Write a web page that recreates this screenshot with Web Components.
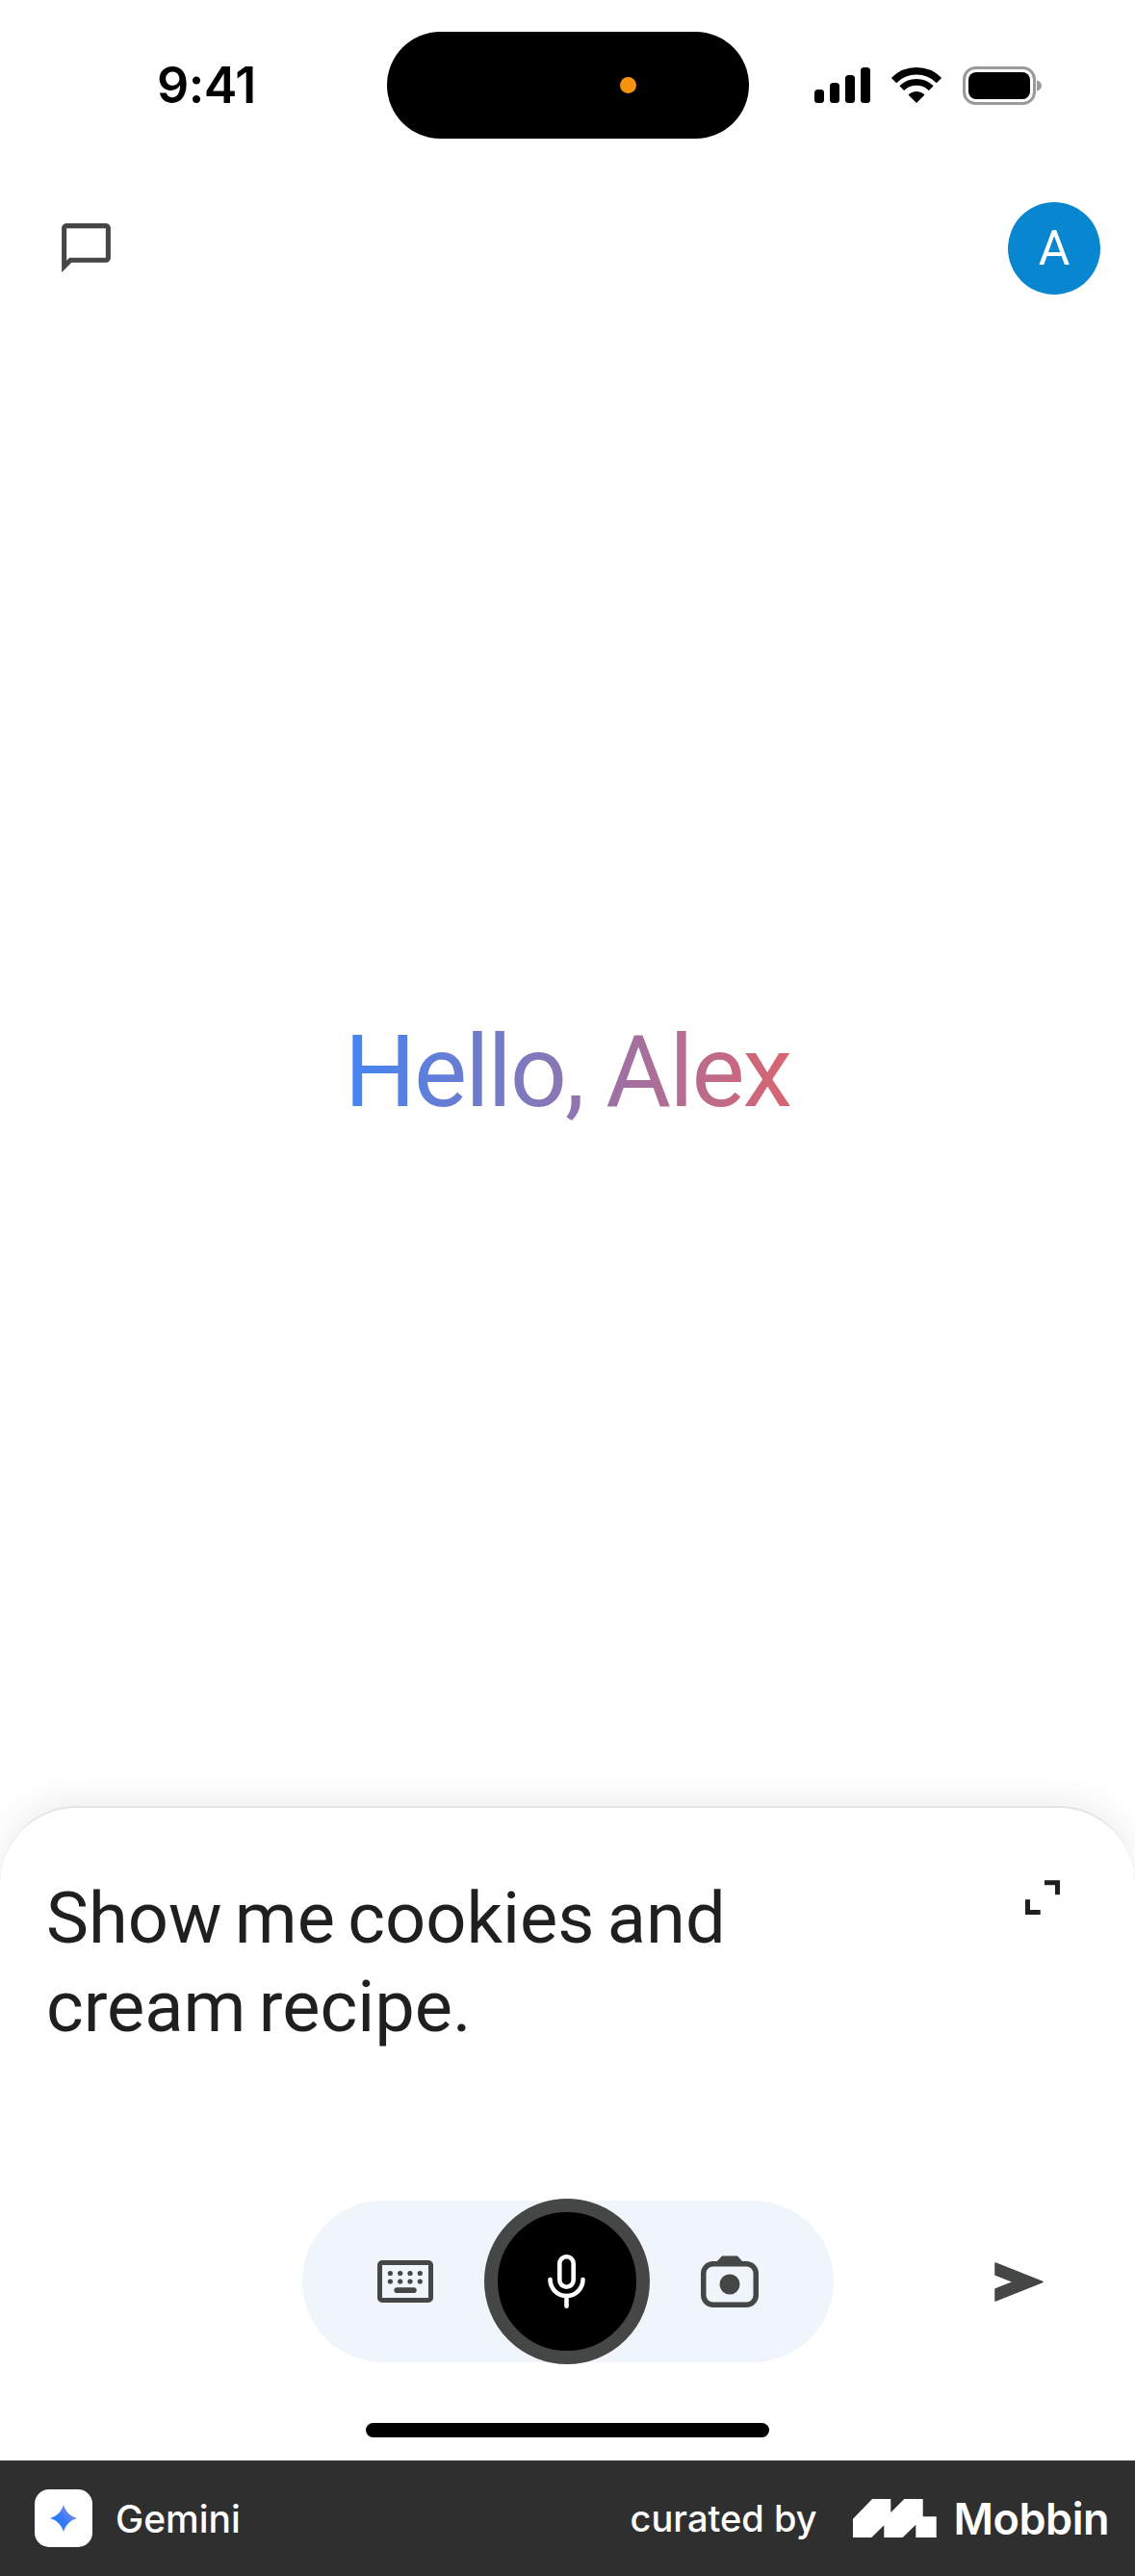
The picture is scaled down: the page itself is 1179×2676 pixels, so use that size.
<!DOCTYPE html>
<html lang="en">
<head>
<meta charset="utf-8">
<title>Gemini</title>
<style>
  html, body { margin: 0; background: #fff; }
</style>
</head>
<body>
<gemini-app></gemini-app>
<script>
class StatusBar extends HTMLElement {
  constructor() {
    super();
    this.attachShadow({ mode: 'open' });
    this.shadowRoot.innerHTML = `
      <style>
        :host { display: flex; align-items: center; height: 111px; padding-top: 33px; }
        .time {
          width: 239px;
          padding-left: 163px;
          font: 600 52px/1 Inter, "Liberation Sans", sans-serif;
          letter-spacing: -0.5px;
          color: #000;
        }
        .island {
          display: flex;
          align-items: center;
          justify-content: flex-end;
          box-sizing: border-box;
          width: 376px;
          height: 111px;
          padding-right: 117px;
          border-radius: 56px;
          background: #000;
        }
        .dot { width: 17px; height: 17px; border-radius: 50%; background: #f7930e; }
        .icons { display: flex; align-items: center; gap: 22px; padding-left: 68px; }
        svg { display: block; }
      </style>
      <div class="time">9:41</div>
      <div class="island"><div class="dot"></div></div>
      <div class="icons">
        <svg width="58" height="37" viewBox="0 0 58 37">
          <rect x="0" y="23" width="10" height="14" rx="3.5"/>
          <rect x="16" y="16" width="10" height="21" rx="3.5"/>
          <rect x="32" y="8" width="10" height="29" rx="3.5"/>
          <rect x="48" y="0" width="10" height="37" rx="3.5"/>
        </svg>
        <svg width="52" height="37" viewBox="0 0 52 37">
          <path d="M2.5 13.5A33.25 33.25 0 0 1 49.5 13.5" fill="none" stroke="#000" stroke-width="7.5"/>
          <path d="M10.7 21.7A21.6 21.6 0 0 1 41.3 21.7" fill="none" stroke="#000" stroke-width="6.7"/>
          <path d="M26 37L17.5 28.5A12 12 0 0 1 34.5 28.5Z"/>
        </svg>
        <svg width="83" height="40" viewBox="0 0 83 40">
          <rect x="1.5" y="1.5" width="73" height="37" rx="12" fill="none" stroke="#9a9a9a" stroke-width="3"/>
          <rect x="6" y="6" width="64" height="28" rx="8"/>
          <path d="M77 14.5c3 .6 5 2.8 5 5.5s-2 4.900-5 5.500z" fill="#9a9a9a"/>
        </svg>
      </div>
    `;
  }
}
customElements.define('status-bar', StatusBar);

class TopBar extends HTMLElement {
  constructor() {
    super();
    this.attachShadow({ mode: 'open' });
    this.shadowRoot.innerHTML = `
      <style>
        :host {
          display: flex;
          justify-content: space-between;
          align-items: flex-start;
          padding: 66px 36px 0 59px;
        }
        svg { display: block; margin-top: 17px; }
        .avatar {
          display: flex;
          align-items: center;
          justify-content: center;
          width: 96px;
          height: 96px;
          border-radius: 50%;
          background: #0986d0;
          color: #fff;
          font: 400 50px/1 Roboto, sans-serif;
        }
      </style>
      <svg width="61" height="61" viewBox="0 0 24 24" fill="#444746">
        <path d="M4 4h16v12H5.170L4 17.170V4m0-2c-1.100 0-2 .9-2 2v18l4-4h14c1.100 0 2-.9 2-2V4c0-1.100-.9-2-2-2H4z"/>
      </svg>
      <div class="avatar">A</div>
    `;
  }
}
customElements.define('top-bar', TopBar);

class GreetingText extends HTMLElement {
  constructor() {
    super();
    this.attachShadow({ mode: 'open' });
    this.shadowRoot.innerHTML = `
      <style>
        :host {
          display: flex;
          flex: 1;
          align-items: center;
          justify-content: center;
          padding-top: 46px;
        }
        span {
          font: 400 104px/1.2 Roboto, sans-serif;
          letter-spacing: -2px;
          color: #8f73c8;
          background: linear-gradient(90deg, #4285f4, #d96570);
          -webkit-background-clip: text;
          background-clip: text;
          -webkit-text-fill-color: transparent;
        }
      </style>
      <span><slot></slot></span>
    `;
  }
}
customElements.define('greeting-text', GreetingText);

class VoiceControls extends HTMLElement {
  constructor() {
    super();
    this.attachShadow({ mode: 'open' });
    this.shadowRoot.innerHTML = `
      <style>
        :host {
          display: grid;
          grid-template-columns: 1fr auto 1fr;
          align-items: center;
        }
        .pill {
          grid-column: 2;
          display: flex;
          align-items: center;
          justify-content: center;
          gap: 53px;
          width: 552px;
          height: 168px;
          border-radius: 84px;
          background: #f0f5fb;
        }
        .mic {
          display: flex;
          align-items: center;
          justify-content: center;
          box-sizing: border-box;
          width: 172px;
          height: 172px;
          margin: -2px 0;
          border: 14px solid #444746;
          border-radius: 50%;
          background: #000;
        }
        svg { display: block; }
        .send { margin-left: 167px; }
      </style>
      <div class="pill">
        <svg width="58" height="44" viewBox="0 0 58 44" fill="#444746">
          <rect x="2.500" y="2.500" width="53" height="39" rx="2.500" fill="none" stroke="#444746" stroke-width="5"/>
          <circle cx="13.400" cy="13.500" r="2.600"/><circle cx="23.700" cy="13.500" r="2.600"/>
          <circle cx="34" cy="13.500" r="2.600"/><circle cx="44.300" cy="13.500" r="2.600"/>
          <circle cx="13.400" cy="22" r="2.600"/><circle cx="23.700" cy="22" r="2.600"/>
          <circle cx="34" cy="22" r="2.600"/><circle cx="44.300" cy="22" r="2.600"/>
          <rect x="17.400" y="28.300" width="23.300" height="5.700" rx="2.800"/>
        </svg>
        <div class="mic">
          <svg width="39" height="56" viewBox="0 0 39 56" fill="none" stroke="#fff" stroke-width="4.600" stroke-linecap="round">
            <rect x="12.300" y="2.300" width="14.400" height="31.400" rx="7.200"/>
            <path d="M2.500 26A17 17 0 0 0 36.500 26"/>
            <path d="M19.500 43V53.700"/>
          </svg>
        </div>
        <svg width="60" height="54" viewBox="0 0 60 54" fill="#444746">
          <rect x="2.750" y="8.750" width="54.500" height="42.500" rx="10" fill="none" stroke="#444746" stroke-width="5.500"/>
          <path d="M16 7L22 .5H38L44 7Z"/>
          <circle cx="30" cy="30" r="10.500"/>
        </svg>
      </div>
      <svg class="send" width="51" height="41" viewBox="0 0 51 41" fill="#444746">
        <path d="M1 1L50 20.500L1 40V28L20 20.500L1 13Z" stroke="#444746" stroke-width="1.500" stroke-linejoin="round"/>
      </svg>
    `;
  }
}
customElements.define('voice-controls', VoiceControls);

class ComposerPanel extends HTMLElement {
  constructor() {
    super();
    this.attachShadow({ mode: 'open' });
    this.shadowRoot.innerHTML = `
      <style>
        :host {
          display: flex;
          flex-direction: column;
          box-sizing: border-box;
          height: 680px;
          border-top: 2px solid #e2e3e3;
          border-radius: 80px 80px 0 0;
          background: #fff;
          box-shadow: 0 -6px 36px rgba(0, 0, 0, 0.07);
        }
        .input {
          display: flex;
          justify-content: space-between;
          align-items: flex-start;
          padding: 69px 78px 0 48px;
          height: 408px;
          box-sizing: border-box;
        }
        .text {
          width: 800px;
          font: 400 74px/92px Roboto, sans-serif;
          word-spacing: -5px;
          color: #1f1f1f;
        }
        svg { display: block; margin-top: 6px; }
        .home {
          align-self: center;
          width: 419px;
          height: 15px;
          margin-top: 63px;
          border-radius: 8px;
          background: #000;
        }
      </style>
      <div class="input">
        <div class="text"><slot></slot></div>
        <svg width="36" height="36" viewBox="0 0 36 36" fill="none" stroke="#1f1f1f" stroke-width="5">
          <path d="M20 2.800H33.500V15.300"/>
          <path d="M2.500 20.300V33.500H15.700"/>
        </svg>
      </div>
      <voice-controls></voice-controls>
      <div class="home"></div>
    `;
  }
}
customElements.define('composer-panel', ComposerPanel);

class MobbinFooter extends HTMLElement {
  constructor() {
    super();
    this.attachShadow({ mode: 'open' });
    this.shadowRoot.innerHTML = `
      <style>
        :host {
          display: flex;
          justify-content: space-between;
          align-items: center;
          box-sizing: border-box;
          height: 120px;
          padding: 0 27px 0 36px;
          background: #2f2f2f;
          color: #fff;
          font: 500 38px/1 Inter, sans-serif;
        }
        .side { display: flex; align-items: center; }
        .app {
          display: flex;
          align-items: center;
          justify-content: center;
          width: 60px;
          height: 60px;
          margin-right: 24px;
          border-radius: 15px;
          background: #fff;
        }
        .name { font-size: 39px; }
        .logo { display: block; margin: 0 18px 0 37px; }
        .brand { font-weight: 600; font-size: 45px; letter-spacing: -0.5px; }
      </style>
      <div class="side">
        <div class="app">
          <svg width="28" height="28" viewBox="0 0 28 28">
            <defs>
              <linearGradient id="star" x1="0" y1="1" x2="1" y2="0">
                <stop offset="0.45" stop-color="#2f7bf5"/>
                <stop offset="1" stop-color="#b08ef0"/>
              </linearGradient>
            </defs>
            <path d="M14 0C16 7 21 12 28 14C21 16 16 21 14 28C12 21 7 16 0 14C7 12 12 7 14 0Z" fill="url(#star)"/>
          </svg>
        </div>
        <span class="name">Gemini</span>
      </div>
      <div class="side">
        <span>curated by</span>
        <svg class="logo" width="87" height="40" viewBox="10 10 87 40" fill="#fff">
          <path d="M10 30.700L30 10H49.300V24L63.300 10H82.700V28.300H96.700V50H75.300V36.700L61.700 50H42.300V37.300L29.300 50H10Z"/>
        </svg>
        <span class="brand">Mobbin</span>
      </div>
    `;
  }
}
customElements.define('mobbin-footer', MobbinFooter);

class GeminiApp extends HTMLElement {
  constructor() {
    super();
    this.attachShadow({ mode: 'open' });
    this.shadowRoot.innerHTML = `
      <style>
        :host {
          display: flex;
          flex-direction: column;
          height: 2676px;
          overflow: hidden;
          background: #fff;
        }
      </style>
      <status-bar></status-bar>
      <top-bar></top-bar>
      <greeting-text>Hello, Alex</greeting-text>
      <composer-panel>Show me cookies and<br>cream recipe.</composer-panel>
      <mobbin-footer></mobbin-footer>
    `;
  }
}
customElements.define('gemini-app', GeminiApp);
</script>
</body>
</html>
